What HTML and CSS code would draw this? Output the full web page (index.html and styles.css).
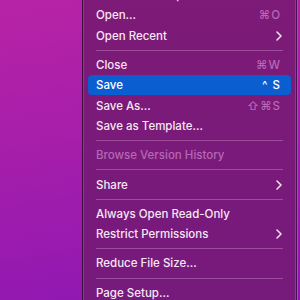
FILE: index.html
```html
<!DOCTYPE html>
<html lang="en">
<head>
    <meta charset="UTF-8">
    <title>File Menu</title>
    <link rel="stylesheet" href="styles.css">
</head>
<body>
    <div class="desktop">
        <div class="menu">
            <div class="item"><span>New from Template...</span><span class="key">⇧⌘P</span></div>
            <div class="item"><span>Open...</span><span class="key">⌘O</span></div>
            <div class="item"><span>Open Recent</span><svg class="arrow" viewBox="0 0 6 10"><path d="M1 1l4 4-4 4"/></svg></div>
            <div class="sep"></div>
            <div class="item"><span>Close</span><span class="key">⌘W</span></div>
            <div class="item active"><span>Save</span><span class="key">^ S</span></div>
            <div class="item"><span>Save As...</span><span class="key">⇧⌘S</span></div>
            <div class="item"><span>Save as Template...</span></div>
            <div class="sep"></div>
            <div class="item disabled"><span>Browse Version History</span></div>
            <div class="sep"></div>
            <div class="item"><span>Share</span><svg class="arrow" viewBox="0 0 6 10"><path d="M1 1l4 4-4 4"/></svg></div>
            <div class="sep"></div>
            <div class="item"><span>Always Open Read-Only</span></div>
            <div class="item"><span>Restrict Permissions</span><svg class="arrow" viewBox="0 0 6 10"><path d="M1 1l4 4-4 4"/></svg></div>
            <div class="sep"></div>
            <div class="item"><span>Reduce File Size...</span></div>
            <div class="sep"></div>
            <div class="item"><span>Page Setup...</span></div>
        </div>
    </div>
</body>
</html>
```

FILE: styles.css
```css
body {
    margin: 0;
    font-family: 'Inter', 'Liberation Sans', sans-serif;
    overflow: hidden;
}

.desktop {
    width: 300px;
    height: 300px;
    background: linear-gradient(170deg, #b823a6 0%, #a51eaa 45%, #8c17b4 100%);
    overflow: hidden;
}

.menu {
    margin-left: 82px;
    margin-top: -15px;
    width: 215px;
    padding: 0 5px;
    box-sizing: border-box;
    background: linear-gradient(180deg, #7e1a77 0%, #761a7d 100%);
    border-left: 1px solid #3b0c3c;
    border-right: 1px solid #4a1050;
    box-shadow: inset 1px 0 0 #8e3a8c, inset -1px 0 0 #8e3a8c, 1px 0 0 #c040b8;
}

.item {
    height: 20.3px;
    display: flex;
    align-items: center;
    justify-content: space-between;
    padding: 0 10px 0 8px;
    font-size: 11.5px;
    font-weight: 500;
    color: #f6e8f4;
    border-radius: 4px;
}

.item.active {
    background: #0b5ed0;
    color: #ffffff;
}

.item.active .key {
    color: #ffffff;
}

.item.disabled {
    color: #b867b4;
}

.key {
    color: #b968b5;
    letter-spacing: 1px;
}

.arrow {
    width: 6px;
    height: 10px;
    fill: none;
    stroke: #f6e8f4;
    stroke-width: 1.5;
    stroke-linecap: round;
    stroke-linejoin: round;
    margin-right: -1px;
}

.sep {
    height: 1px;
    margin: 4px 8px 4px 8px;
    background: #9c4c99;
}
```
